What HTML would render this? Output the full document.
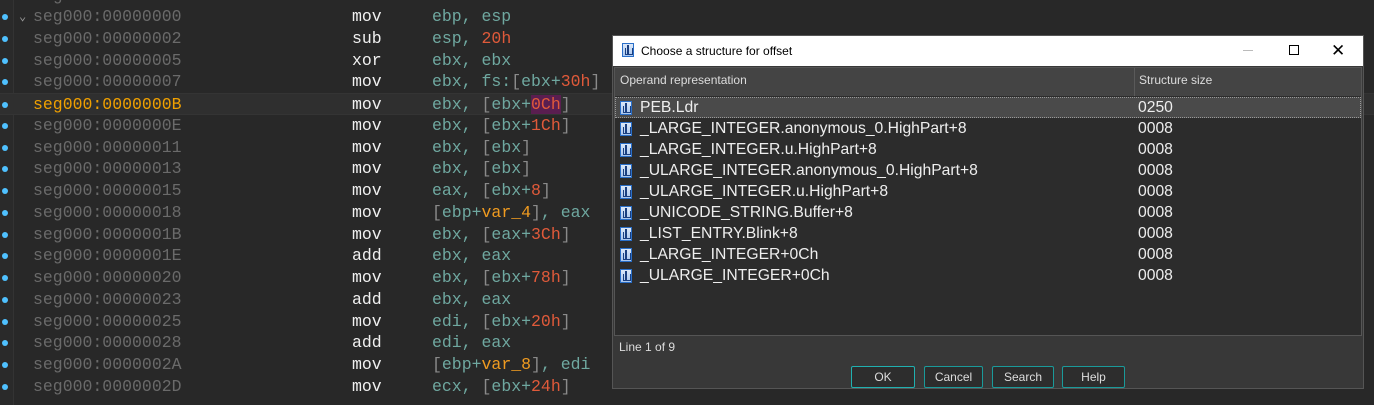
<!DOCTYPE html>
<html><head><meta charset="utf-8"><style>
*{margin:0;padding:0;box-sizing:border-box}
body{width:1374px;height:405px;background:#282828;overflow:hidden;position:relative;font-family:"Liberation Mono",monospace}
.gut{position:absolute;left:0;top:0;width:14px;height:405px;border-right:1px solid #333;background:#2a2a2a}
.row{position:absolute;left:0;height:22px;width:1374px;font-size:16.5px;line-height:22px;white-space:pre}
.row .dot{position:absolute;left:2px;top:8px;width:6px;height:6px;border-radius:50%;background:#4fc1ff}
.row .a{position:absolute;left:33px;color:#6a6a6a}
.row .m{position:absolute;left:352px;color:#f0f0f0}
.row .o{position:absolute;left:432px;color:#6fa8a0}
.n{color:#e05a3a}.v{color:#f09b20}.b{color:#8a8a8a}
.dlg{position:absolute;left:612px;top:35px;width:752px;height:354px;background:#383838;border:1px solid #555;font-family:"Liberation Sans",sans-serif}
.tb{height:30px;background:#fff;color:#000;font-size:12px;line-height:30px;padding-left:28px;position:relative}
.ico{position:absolute;width:12px;height:14px;border:1px solid #2a6fc9;background:linear-gradient(#dce8f8,#a9c6ee)}
.ico:before{content:"";position:absolute;left:4px;top:1px;width:2px;height:10px;background:#1a3f80}
.ico:after{content:"";position:absolute;left:2px;top:4px;width:6px;height:6px;border:1px solid #1a3f80;border-top:none}
.hdr{position:absolute;color:#ddd;font-size:12px;line-height:24px;background:#444;height:28px}
.list{position:absolute;left:1px;top:31px;width:748px;height:269px;border:1px solid #555;background:#2c2c2c}
.it{position:absolute;left:5px;height:21px;width:740px;color:#eee;font-size:15.7px;line-height:21px}
.btn{position:absolute;top:330px;height:22px;border:1px solid #1a9a9a;background:#2d2d2d;color:#ddd;font-size:12px;text-align:center;line-height:20px;border-radius:2px}
</style></head><body>
<div class="gut"></div>
<div class="row" style="top:-15px"><span class="a">seg000:00000000</span></div>
<div class="row" style="top:6px"><span class="dot"></span><span style="position:absolute;left:19px;color:#999;font-size:12px">⌄</span><span class="a">seg000:00000000</span><span class="m">mov</span><span class="o">ebp, esp</span></div>
<div class="row" style="top:28px"><span class="dot"></span><span class="a">seg000:00000002</span><span class="m">sub</span><span class="o">esp, <span class="n">20h</span></span></div>
<div class="row" style="top:50px"><span class="dot"></span><span class="a">seg000:00000005</span><span class="m">xor</span><span class="o">ebx, ebx</span></div>
<div class="row" style="top:71px"><span class="dot"></span><span class="a">seg000:00000007</span><span class="m">mov</span><span class="o">ebx, fs:<span class="b">[</span>ebx+<span class="n">30h</span><span class="b">]</span></span></div>
<div class="row" style="top:93px;background:#2f2f2f;border-top:1px solid #343434;border-bottom:1px solid #343434"><span class="dot"></span><span class="a" style="color:#f0a000">seg000:0000000B</span><span class="m">mov</span><span class="o">ebx, <span class="b">[</span>ebx+<span class="n" style="background:#5a1e50">0Ch</span><span class="b">]</span></span></div>
<div class="row" style="top:115px"><span class="dot"></span><span class="a">seg000:0000000E</span><span class="m">mov</span><span class="o">ebx, <span class="b">[</span>ebx+<span class="n">1Ch</span><span class="b">]</span></span></div>
<div class="row" style="top:137px"><span class="dot"></span><span class="a">seg000:00000011</span><span class="m">mov</span><span class="o">ebx, <span class="b">[</span>ebx<span class="b">]</span></span></div>
<div class="row" style="top:158px"><span class="dot"></span><span class="a">seg000:00000013</span><span class="m">mov</span><span class="o">ebx, <span class="b">[</span>ebx<span class="b">]</span></span></div>
<div class="row" style="top:180px"><span class="dot"></span><span class="a">seg000:00000015</span><span class="m">mov</span><span class="o">eax, <span class="b">[</span>ebx+<span class="n">8</span><span class="b">]</span></span></div>
<div class="row" style="top:202px"><span class="dot"></span><span class="a">seg000:00000018</span><span class="m">mov</span><span class="o"><span class="b">[</span>ebp+<span class="v">var_4</span><span class="b">]</span>, eax</span></div>
<div class="row" style="top:224px"><span class="dot"></span><span class="a">seg000:0000001B</span><span class="m">mov</span><span class="o">ebx, <span class="b">[</span>eax+<span class="n">3Ch</span><span class="b">]</span></span></div>
<div class="row" style="top:245px"><span class="dot"></span><span class="a">seg000:0000001E</span><span class="m">add</span><span class="o">ebx, eax</span></div>
<div class="row" style="top:267px"><span class="dot"></span><span class="a">seg000:00000020</span><span class="m">mov</span><span class="o">ebx, <span class="b">[</span>ebx+<span class="n">78h</span><span class="b">]</span></span></div>
<div class="row" style="top:289px"><span class="dot"></span><span class="a">seg000:00000023</span><span class="m">add</span><span class="o">ebx, eax</span></div>
<div class="row" style="top:311px"><span class="dot"></span><span class="a">seg000:00000025</span><span class="m">mov</span><span class="o">edi, <span class="b">[</span>ebx+<span class="n">20h</span><span class="b">]</span></span></div>
<div class="row" style="top:332px"><span class="dot"></span><span class="a">seg000:00000028</span><span class="m">add</span><span class="o">edi, eax</span></div>
<div class="row" style="top:354px"><span class="dot"></span><span class="a">seg000:0000002A</span><span class="m">mov</span><span class="o"><span class="b">[</span>ebp+<span class="v">var_8</span><span class="b">]</span>, edi</span></div>
<div class="row" style="top:376px"><span class="dot"></span><span class="a">seg000:0000002D</span><span class="m">mov</span><span class="o">ecx, <span class="b">[</span>ebx+<span class="n">24h</span><span class="b">]</span></span></div>

<div class="dlg">
 <div class="tb"><span class="ico" style="left:9px;top:7px"></span>Choose a structure for offset
  <span style="position:absolute;left:630px;top:14px;width:10px;height:1px;background:#bbb"></span>
  <span style="position:absolute;left:676px;top:9px;width:10px;height:10px;border:1px solid #000"></span>
  <span style="position:absolute;left:718px;top:0;font-size:17px">✕</span>
 </div>
 <div class="list">
  <div class="hdr" style="left:0;top:0;width:519px;padding-left:5px">Operand representation</div>
  <div class="hdr" style="left:519px;top:0;width:227px;border-left:1px solid #5a5a5a;padding-left:4px">Structure size</div>
  <div class="it" style="top:29px;left:0;width:746px;background:#4a4a4a;border:1px dotted #999"></div>
  <div class="it" style="top:29px"><span class="ico" style="left:0;top:4px"></span><span style="position:absolute;left:20px">PEB.Ldr</span><span style="position:absolute;left:518px">0250</span></div>
  <div class="it" style="top:50px"><span class="ico" style="left:0;top:4px"></span><span style="position:absolute;left:20px">_LARGE_INTEGER.anonymous_0.HighPart+8</span><span style="position:absolute;left:518px">0008</span></div>
  <div class="it" style="top:71px"><span class="ico" style="left:0;top:4px"></span><span style="position:absolute;left:20px">_LARGE_INTEGER.u.HighPart+8</span><span style="position:absolute;left:518px">0008</span></div>
  <div class="it" style="top:92px"><span class="ico" style="left:0;top:4px"></span><span style="position:absolute;left:20px">_ULARGE_INTEGER.anonymous_0.HighPart+8</span><span style="position:absolute;left:518px">0008</span></div>
  <div class="it" style="top:113px"><span class="ico" style="left:0;top:4px"></span><span style="position:absolute;left:20px">_ULARGE_INTEGER.u.HighPart+8</span><span style="position:absolute;left:518px">0008</span></div>
  <div class="it" style="top:134px"><span class="ico" style="left:0;top:4px"></span><span style="position:absolute;left:20px">_UNICODE_STRING.Buffer+8</span><span style="position:absolute;left:518px">0008</span></div>
  <div class="it" style="top:155px"><span class="ico" style="left:0;top:4px"></span><span style="position:absolute;left:20px">_LIST_ENTRY.Blink+8</span><span style="position:absolute;left:518px">0008</span></div>
  <div class="it" style="top:176px"><span class="ico" style="left:0;top:4px"></span><span style="position:absolute;left:20px">_LARGE_INTEGER+0Ch</span><span style="position:absolute;left:518px">0008</span></div>
  <div class="it" style="top:197px"><span class="ico" style="left:0;top:4px"></span><span style="position:absolute;left:20px">_ULARGE_INTEGER+0Ch</span><span style="position:absolute;left:518px">0008</span></div>
 </div>
 <div style="position:absolute;left:6px;top:304px;color:#ddd;font-size:12px">Line 1 of 9</div>
 <div class="btn" style="left:238px;width:64px;border-color:#20b0b0">OK</div>
 <div class="btn" style="left:311px;width:59px">Cancel</div>
 <div class="btn" style="left:379px;width:62px">Search</div>
 <div class="btn" style="left:449px;width:63px">Help</div>
</div>
</body></html>
